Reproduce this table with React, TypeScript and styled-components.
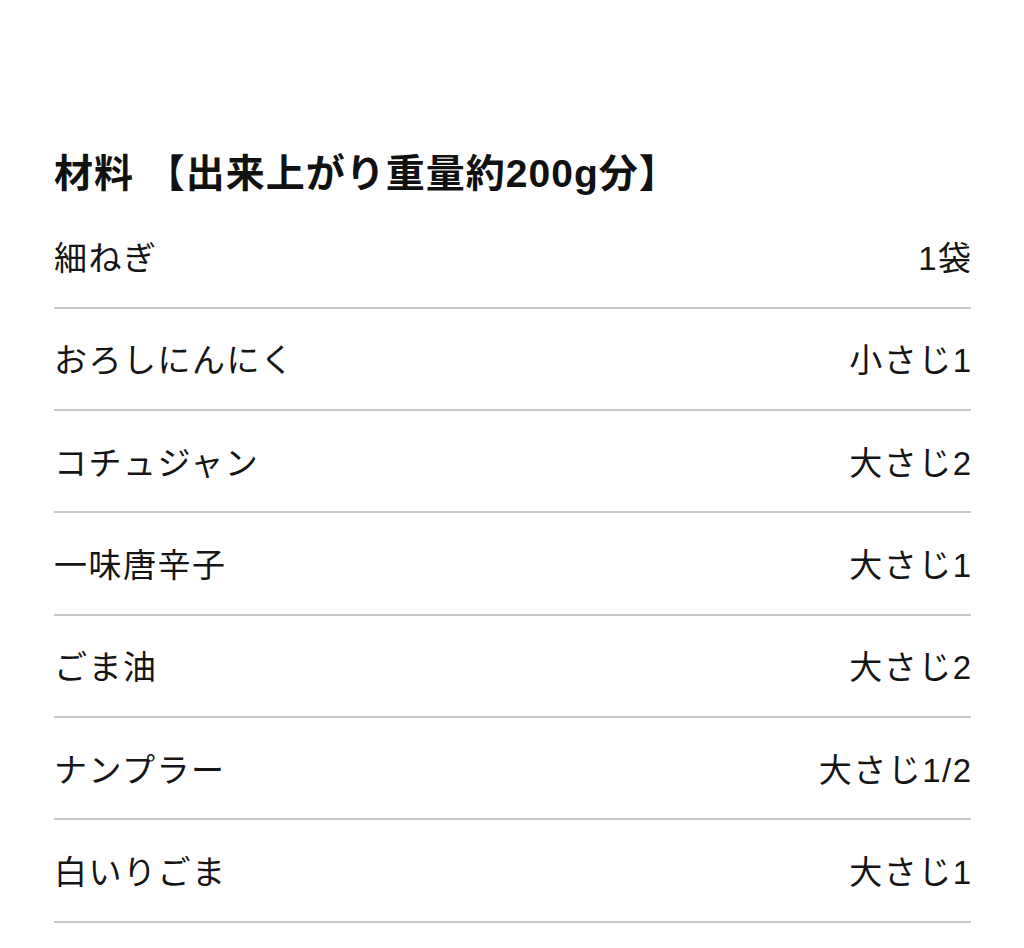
import styled, { createGlobalStyle } from "styled-components";

const GlobalStyle = createGlobalStyle`
  html, body {
    margin: 0;
    padding: 0;
    background: #ffffff;
  }
  body {
    font-family: "Liberation Sans", "Noto Sans CJK JP", sans-serif;
    color: #111111;
  }
`;

interface Ingredient {
  name: string;
  amount: string;
}

const ingredients: Ingredient[] = [
  { name: "細ねぎ", amount: "1袋" },
  { name: "おろしにんにく", amount: "小さじ1" },
  { name: "コチュジャン", amount: "大さじ2" },
  { name: "一味唐辛子", amount: "大さじ1" },
  { name: "ごま油", amount: "大さじ2" },
  { name: "ナンプラー", amount: "大さじ1/2" },
  { name: "白いりごま", amount: "大さじ1" },
];

export default function App() {
  return (
    <>
      <GlobalStyle />
      <Section>
        <Heading>材料 【出来上がり重量約200g分】</Heading>
        <List>
          {ingredients.map((item) => (
            <Row key={item.name}>
              <Name>{item.name}</Name>
              <Amount>{item.amount}</Amount>
            </Row>
          ))}
        </List>
      </Section>
    </>
  );
}

const Section = styled.section`
  padding: 149px 53px 0 54px;
`;

const Heading = styled.h2`
  margin: 0 0 7.5px;
  height: 50px;
  line-height: 50px;
  font-size: 39px;
  font-weight: 700;
  color: #111111;
  letter-spacing: 1px;
  white-space: nowrap;
`;

const List = styled.ul`
  list-style: none;
  margin: 0;
  padding: 0;
`;

const Row = styled.li`
  box-sizing: border-box;
  height: 102.3px;
  display: flex;
  align-items: center;
  justify-content: space-between;
  padding-bottom: 1px;
  border-bottom: 2px solid #c8c8c8;
  font-size: 33px;
  color: #151515;
`;

const Name = styled.span`
  letter-spacing: 1.5px;
`;

const Amount = styled.span`
  letter-spacing: 1.5px;
  margin-right: -1.5px;
`;
